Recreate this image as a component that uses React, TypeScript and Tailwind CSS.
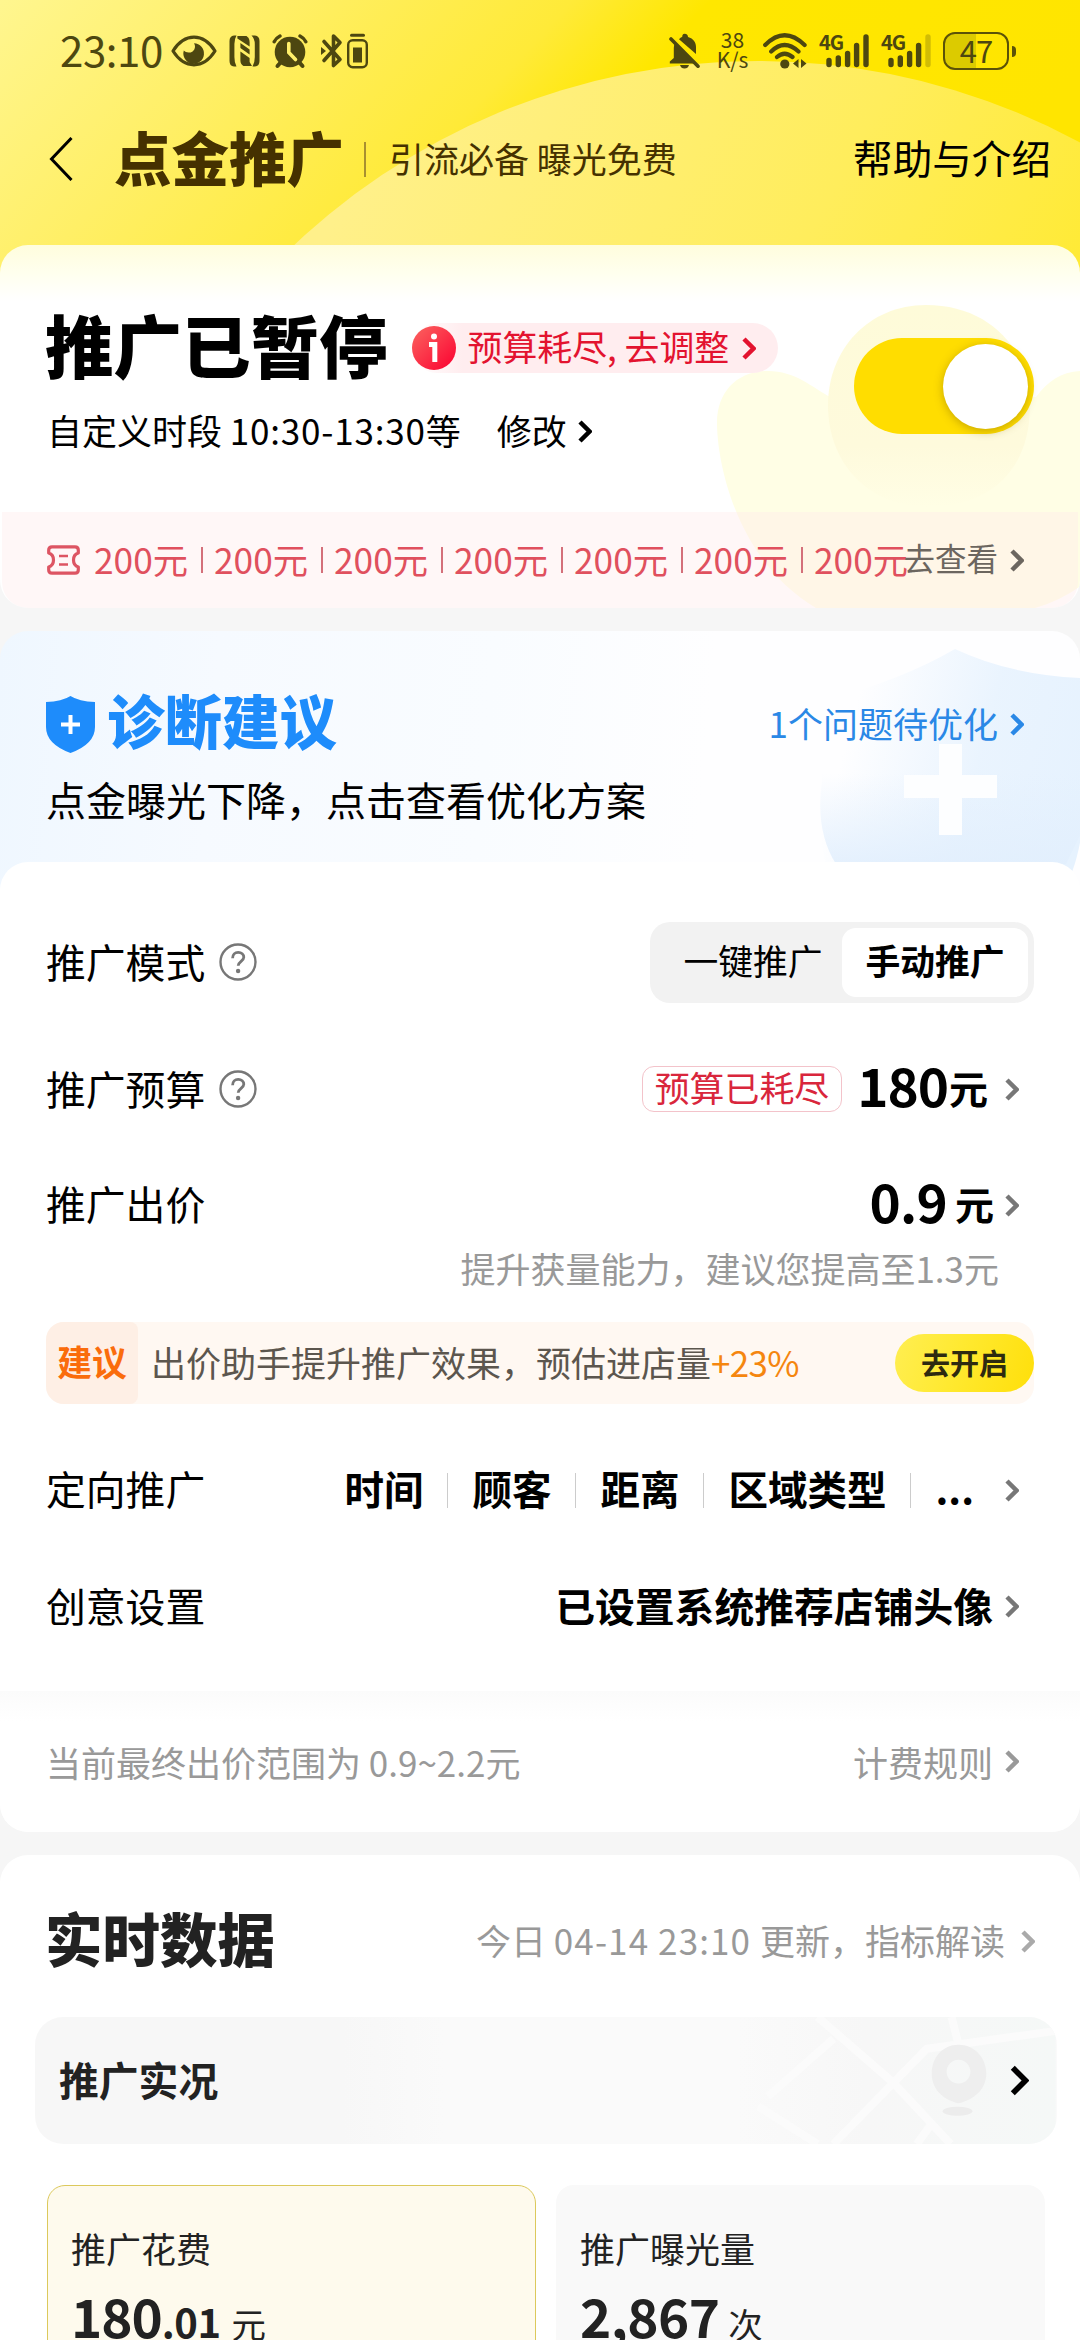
import { clsx } from "clsx";
import type { ReactNode } from "react";
import { twMerge } from "tailwind-merge";

type ChevronProps = {
  className?: string;
  strokeWidth?: number;
};

const Chevron = ({ className, strokeWidth = 4.5 }: ChevronProps) => (
  <svg
    viewBox="0 0 14 23"
    fill="none"
    stroke="currentColor"
    strokeWidth={strokeWidth}
    className={twMerge("h-[23px] w-[14px] shrink-0", className)}
  >
    <path d="M2 2 L11.5 11.5 L2 21" />
  </svg>
);

const HelpIcon = () => (
  <svg viewBox="0 0 38 38" fill="none" className="h-[38px] w-[38px] text-[#777]">
    <circle cx="19" cy="19" r="17.5" stroke="currentColor" strokeWidth="2.4" />
    <path
      d="M13.6 15.2 C13.6 11.6 15.9 9.4 19.2 9.4 C22.5 9.4 24.8 11.4 24.8 14.3 C24.8 18.2 19.2 18.6 19.2 22.8"
      stroke="currentColor"
      strokeWidth="2.8"
    />
    <circle cx="19.1" cy="28" r="2.2" fill="currentColor" />
  </svg>
);

const SignalIcon = ({ weak }: { weak?: boolean }) => (
  <div className="relative h-[36px] w-[50px]">
    <span className="absolute -top-px left-0 text-[20px] leading-none font-bold tracking-[-1px]">
      4G
    </span>
    <svg viewBox="0 0 50 36" className="h-full w-full" stroke="currentColor" strokeWidth="5.4" strokeLinecap="round">
      <path d="M10 27.5 V31.5 M19.3 25 V31.5 M28.6 20.5 V31.5 M37.6 12.5 V31.5" />
      <path d="M47 4 V31.5" opacity={weak ? 0.25 : 1} />
    </svg>
  </div>
);

const StatusBar = () => (
  <div className="flex h-[36px] items-center justify-between pr-[64px] pl-[60px] text-[#4d4710]">
    <div className="flex items-center">
      <span className="mb-1 w-[111px] text-[42px] leading-[36px] tracking-[-0.4px]">23:10</span>
      <svg viewBox="0 0 46 32" className="h-[32px] w-[46px]" fill="none">
        <path
          d="M2 16 C8 6.5 15 2.2 23 2.2 C31 2.2 38 6.5 44 16 C38 25.5 31 29.8 23 29.8 C15 29.8 8 25.5 2 16 Z"
          stroke="currentColor"
          strokeWidth="3.2"
          strokeLinejoin="round"
        />
        <path
          d="M23 8.2 A10.3 10.3 0 1 1 12.8 15.6 C14.6 17.6 18.6 18.4 21.6 16.4 C24.4 14.4 24.6 10.6 23 8.2 Z"
          fill="currentColor"
        />
      </svg>
      <svg viewBox="0 0 31 32" className="ml-[12px] h-[32px] w-[31px]" fill="currentColor">
        <path d="M7.5 0.5 H5 Q0.5 1 0.5 6 V26 Q0.5 31 5 31.5 H7.5 Q5.4 28 5.4 22 V9 Q5.4 4 7.5 0.5 Z" />
        <path d="M23.5 31.5 H26 Q30.5 31 30.5 26 V6 Q30.5 1 26 0.5 H22.5 Q25.8 4 25.8 9 V22 Q25.8 28 23.5 31.5 Z" />
        <path d="M8.4 1 H17.5 Q20.6 3 20.6 7 V11.6 L8.4 3.4 Z" />
        <path d="M11.4 8 L20.6 14.6 V19.6 L11.4 13 Z M11.4 16.5 L20.6 23 V27 L23 31 H14.5 Q11.4 29 11.4 25.5 Z" />
      </svg>
      <svg viewBox="0 0 36 36" className="ml-[12px] h-[36px] w-[36px]">
        <path d="M9 29 L5.5 33 M27 29 L30.5 33" stroke="currentColor" strokeWidth="4" strokeLinecap="round" />
        <path
          d="M2.2 8.8 Q4 5 8 3 M33.8 8.8 Q32 5 28 3"
          fill="none"
          stroke="currentColor"
          strokeWidth="3.4"
          strokeLinecap="round"
        />
        <circle cx="18" cy="19" r="15.3" fill="currentColor" />
        <path d="M16.8 10.5 V19.5 L23.5 26.5" fill="none" stroke="#fff06b" strokeWidth="3.6" strokeLinecap="round" />
      </svg>
      <svg viewBox="0 0 22 36" className="ml-[13px] h-[36px] w-[22px]" fill="none" stroke="currentColor">
        <path
          d="M3 8.5 L19 26.5 L12.5 32.5 V3 L19 9.5 L3 27.5"
          strokeWidth="3.6"
          strokeLinejoin="round"
          strokeLinecap="round"
        />
        <path d="M0 14 L5 18 L0 22 Z" fill="currentColor" stroke="none" />
      </svg>
      <svg viewBox="0 0 21 36" className="ml-[4px] h-[36px] w-[21px]" fill="none" stroke="currentColor">
        <path d="M4.5 2.3 H16.5" strokeWidth="3" strokeLinecap="round" />
        <rect x="1.2" y="7.2" width="18.6" height="27" rx="4.5" strokeWidth="2.4" />
        <rect x="6" y="14.5" width="9" height="15" fill="currentColor" stroke="none" />
      </svg>
    </div>
    <div className="flex items-center">
      <svg viewBox="0 0 31 36" className="h-[36px] w-[31px]" fill="currentColor">
        <path d="M15.5 0.8 C18 0.8 19 2.3 19 4 C24.5 5.5 27 9.5 27 14 V21 L10 6.2 C11 5 12 4.4 13.2 4 C13.2 2.2 13.8 0.8 15.5 0.8 Z" />
        <path d="M5.8 10 L26 30.5 H0.8 V28.5 L4.8 25 V15 Q4.8 12 5.8 10 Z" />
        <path d="M11 32 H20 Q19 35.5 15.5 35.5 Q12 35.5 11 32 Z" />
        <path d="M2 6 L29 33.2" stroke="currentColor" strokeWidth="3.6" strokeLinecap="round" />
      </svg>
      <div className="mb-1 ml-[16px] flex w-[33px] flex-col items-center text-[21px] leading-[20px]">
        <span>38</span>
        <span>K/s</span>
      </div>
      <svg viewBox="0 0 44 36" className="ml-[14px] h-[36px] w-[44px]" fill="none" stroke="currentColor">
        <path
          d="M2.2 12 Q21.5 -7.5 41.6 12 M8.2 18.5 Q21.5 5.5 35.5 18.5 M14 24 Q21.5 17.5 29.5 24"
          strokeWidth="4.2"
          strokeLinecap="round"
        />
        <circle cx="21.8" cy="31" r="4.6" fill="currentColor" stroke="none" />
        <path d="M35.5 26 V35 L30 30.5 Z M38 26 V35 L43.5 30.5 Z" fill="currentColor" stroke="none" />
      </svg>
      <div className="ml-[12px]">
        <SignalIcon />
      </div>
      <div className="ml-[12px]">
        <SignalIcon weak />
      </div>
      <div className="ml-[12px] flex h-[38px] w-[66px] items-center justify-center rounded-[12px] border-[2.5px] border-[#5b5208] bg-[linear-gradient(90deg,#dccb00_50%,transparent_50%)] text-[31px] leading-none tracking-[-1px]">
        <span className="mb-1">47</span>
      </div>
      <div className="ml-[3px] h-[11px] w-[4px] rounded-r-sm bg-[#5b5208]" />
    </div>
  </div>
);

const PageHeader = () => (
  <header className="relative h-[245px] shrink-0 pt-[33px]">
    <svg viewBox="0 0 1080 290" className="absolute inset-x-0 top-0 h-[290px] w-full">
      <defs>
        <linearGradient id="sky" x1="0" y1="0" x2="1" y2="0.25">
          <stop offset="0" stopColor="#fff68f" />
          <stop offset="0.25" stopColor="#ffef66" />
          <stop offset="0.5" stopColor="#ffea38" />
          <stop offset="0.62" stopColor="#ffe700" />
          <stop offset="1" stopColor="#ffe500" />
        </linearGradient>
        <linearGradient id="arc" x1="0.25" y1="0" x2="0.8" y2="0.3">
          <stop offset="0" stopColor="#fff08a" />
          <stop offset="0.5" stopColor="#ffed5c" />
          <stop offset="1" stopColor="#ffe81c" />
        </linearGradient>
      </defs>
      <rect width="1080" height="290" fill="url(#sky)" />
      <circle cx="758" cy="738" r="677" fill="url(#arc)" />
    </svg>
    <div className="relative">
      <StatusBar />
      <div className="mt-[60px] flex h-[60px] items-center pr-[29px] pl-[49px]">
        <svg viewBox="0 0 24 44" className="h-[44px] w-[24px]" fill="none" stroke="#000" strokeWidth="3">
          <path d="M22.5 1 L2.5 22 L22.5 43" />
        </svg>
        <h1 className="mb-[7px] ml-[41px] text-[57.5px] leading-[56px] font-black text-[#453100]">点金推广</h1>
        <div className="ml-[20px] h-[35px] w-[2px] bg-[#a89030]" />
        <p className="mb-1 ml-[23px] text-[35px] leading-none text-[#453100]">引流必备 曝光免费</p>
        <a className="mb-[5px] ml-auto text-[39.6px] leading-none">帮助与介绍</a>
      </div>
    </div>
  </header>
);

const vouchers = ["200元", "200元", "200元", "200元", "200元", "200元", "200元"];

const StatusCard = () => (
  <section className="relative h-[363px] shrink-0 overflow-hidden rounded-[28px] bg-[linear-gradient(180deg,#fffddd_0px,#ffffee_28px,#ffffff_56px)]">
    <svg viewBox="0 0 1080 363" className="absolute inset-0 h-full w-full">
      <defs>
        <linearGradient id="bud" x1="0" y1="0" x2="0" y2="1">
          <stop offset="0" stopColor="#fefbd9" />
          <stop offset="0.7" stopColor="#fefadc" />
          <stop offset="1" stopColor="#fffee5" />
        </linearGradient>
      </defs>
      <path
        d="M717 178 C717 146 738 126 768 126 C795 126 812 142 830 152 H1036 C1048 136 1062 126 1082 126 V340 Q1060 356 1035 363 H816 C735 315 717 215 717 178 Z"
        fill="#fffee5"
      />
      <path d="M828 160 C828 105 868 60 926 60 C990 60 1030 105 1030 160 C1030 230 985 262 928 262 C870 262 828 220 828 160 Z" fill="url(#bud)" />
    </svg>
    <div className="relative flex h-full flex-col">
      <div className="flex h-[267px] items-start justify-between pr-[46px] pl-[45px]">
        <div>
          <div className="mt-[68px] flex h-[70px] items-center">
            <h2 className="mb-2 text-[68.5px] leading-none font-black">推广已暂停</h2>
            <div className="ml-[24px] flex h-[50px] items-center rounded-full bg-[linear-gradient(90deg,#ffffff_0px,#ffedef_50px)] pr-[22px] text-[#e3132f]">
              <svg viewBox="0 0 44 44" className="h-[44px] w-[44px]">
                <defs>
                  <linearGradient id="alert" x1="0" y1="0" x2="1" y2="1">
                    <stop offset="0" stopColor="#fb6560" />
                    <stop offset="1" stopColor="#fb0030" />
                  </linearGradient>
                </defs>
                <circle cx="22" cy="22" r="22" fill="url(#alert)" />
                <circle cx="22" cy="10.5" r="3" fill="#fff" />
                <path d="M17 18.5 H22.8 V36" fill="none" stroke="#fff" strokeWidth="5" />
              </svg>
              <span className="mb-[3px] ml-[12px] text-[34.9px] leading-none">预算耗尽, 去调整</span>
              <Chevron className="ml-[13px]" />
            </div>
          </div>
          <div className="mt-[29px] flex h-[38px] items-center pl-[2px] text-[35px] leading-none">
            <span className="mb-1">
              自定义时段 <span className="tracking-[0.8px]">10:30-13:30</span>等
            </span>
            <span className="mb-1 ml-[36px]">修改</span>
            <Chevron className="ml-[11px]" />
          </div>
        </div>
        <div className="mt-[93px] flex h-[96px] w-[180px] items-center justify-end rounded-full bg-[#ffdd00] pr-[6px]">
          <div className="h-[85px] w-[85px] rounded-full bg-white shadow-[0_2px_10px_rgba(130,100,0,0.45)]" />
        </div>
      </div>
      <div className="mx-[2px] flex h-[96px] items-center rounded-b-[26px] bg-[#ffeaec]/40 pr-[54px] pl-[45px]">
        <svg viewBox="0 0 33 30" className="h-[30px] w-[33px] shrink-0" fill="none" stroke="#dd5563" strokeWidth="3.2">
          <path
            d="M5 1.8 H28 Q31.3 1.8 31.3 5 V8 Q26.5 9.5 26.5 15 Q26.5 20.5 31.3 22 V25 Q31.3 28.2 28 28.2 H5 Q1.7 28.2 1.7 25 V22 Q6.5 20.5 6.5 15 Q6.5 9.5 1.7 8 V5 Q1.7 1.8 5 1.8 Z"
            strokeLinejoin="round"
          />
          <path d="M12 11 H21 M12 19.5 H21" strokeWidth="2.6" />
        </svg>
        <div className="ml-[14px] flex min-w-0 flex-1">
          {vouchers.map((voucher, index) => (
            <div key={index} className="flex w-[120px] shrink-0 items-center">
              <span className="mb-[3px] w-[107px] text-[35.3px] leading-[52px] text-[#e0505e]">{voucher}</span>
              {index < vouchers.length - 1 && <div className="h-[26px] w-[2px] bg-[#d4707a]" />}
            </div>
          ))}
        </div>
        <div className="flex shrink-0 items-center text-[#6c665f]">
          <span className="mb-1 text-[31.5px] leading-none">去查看</span>
          <Chevron className="ml-[12px]" />
        </div>
      </div>
    </div>
  </section>
);

const DiagnosisCard = () => (
  <section className="relative mt-[23px] h-[261px] shrink-0 overflow-hidden rounded-t-[28px] bg-[linear-gradient(95deg,#eff7ff_0%,#f6faff_20%,#f9fcff_45%,#fefeff_65%)]">
    <svg viewBox="0 0 1080 261" className="absolute inset-0 h-full w-full">
      <defs>
        <linearGradient id="shieldBg" x1="0" y1="0.35" x2="1" y2="0.6">
          <stop offset="0.1" stopColor="#e6f2fe" stopOpacity="0" />
          <stop offset="0.6" stopColor="#e6f2fe" stopOpacity="0.85" />
          <stop offset="1" stopColor="#e6f2fe" />
        </linearGradient>
        <linearGradient id="shieldLow" x1="0" y1="0" x2="0" y2="1">
          <stop offset="0.2" stopColor="#e2effd" stopOpacity="0" />
          <stop offset="1" stopColor="#e2effd" stopOpacity="0.9" />
        </linearGradient>
      </defs>
      <path d="M822 70 Q900 50 955 18 Q1010 44 1082 47 V200 Q1076 240 1062 261 H836 Q815 220 822 150 Z" fill="url(#shieldBg)" />
      <path d="M822 120 V150 Q815 200 836 233 H1066 L1082 200 V120 Z" fill="url(#shieldLow)" />
      <path d="M939 113 H962 V144 H997 V167 H962 V204 H939 V167 H904 V144 H939 Z" fill="#fdfeff" />
    </svg>
    <div className="relative flex h-full flex-col pr-[56px] pl-[46px]">
      <div className="mt-[62px] flex h-[62px] items-center">
        <svg viewBox="0 0 49 57" className="h-[57px] w-[49px]">
          <path d="M24.5 0 Q33 5.5 49 6 V31 Q49 48 24.5 57 Q0 48 0 31 V6 Q16 5.5 24.5 0 Z" fill="#1e8cfb" />
          <path d="M24.5 19 V38 M15 28.5 H34" stroke="#fff" strokeWidth="4" />
        </svg>
        <h2 className="mb-2 ml-[12px] text-[57.5px] leading-none font-black text-[#1e8cfb]">诊断建议</h2>
        <div className="ml-auto flex items-center text-[#2a88e6]">
          <span className="mb-1 text-[35px] leading-none">1个问题待优化</span>
          <Chevron className="ml-[12px]" />
        </div>
      </div>
      <p className="mt-[24px] text-[40px] leading-none">点金曝光下降，点击查看优化方案</p>
    </div>
  </section>
);

type SettingRowProps = {
  label: string;
  help?: boolean;
  className?: string;
  children: ReactNode;
};

const SettingRow = ({ label, help, className, children }: SettingRowProps) => (
  <div className={twMerge("flex h-[82px] items-center justify-between pr-[61px] pl-[46px]", className)}>
    <div className="flex items-center gap-[14px]">
      <span className={clsx("text-[39.8px] leading-none", help ? "mb-[3px]" : "mb-1")}>{label}</span>
      {help && <HelpIcon />}
    </div>
    <div className="flex items-center">{children}</div>
  </div>
);

const targets = ["时间", "顾客", "距离", "区域类型"];

const SettingsPanel = () => (
  <section className="relative z-10 -mt-[30px] flex h-[970px] shrink-0 flex-col rounded-[28px] bg-white">
    <div className="pt-[59px]">
      <SettingRow label="推广模式" help className="pr-[46px]">
        <div className="flex h-[81px] w-[384px] items-center rounded-[20px] bg-[#f2f2f2] p-[6px] text-[34.8px] leading-none">
          <span className="mb-1 flex-1 pl-[8px] text-center">一键推广</span>
          <div className="flex h-full w-[186px] items-center justify-center rounded-[14px] bg-white font-bold">
            <span className="mb-1">手动推广</span>
          </div>
        </div>
      </SettingRow>
      <SettingRow label="推广预算" help className="mt-[45px]">
        <span className="flex h-[46px] items-center rounded-[12px] border border-[#f3c3ca] px-[12px] text-[#d9263c]">
          <span className="mb-[3px] text-[34.9px] leading-none">预算已耗尽</span>
        </span>
        <span className="mb-[9px] ml-[15px] text-[53px] leading-none font-bold tracking-[-1px]">180</span>
        <span className="mb-[3px] ml-px text-[39px] leading-none font-bold">元</span>
        <Chevron className="ml-[17px] text-[#777]" />
      </SettingRow>
      <SettingRow label="推广出价" className="mt-[34px]">
        <span className="mb-[9px] text-[53px] leading-none font-bold tracking-[-0.8px]">0.9</span>
        <span className="mb-[3px] ml-[8px] text-[39px] leading-none font-bold">元</span>
        <Chevron className="ml-[11px] text-[#777]" />
      </SettingRow>
      <p className="mt-[4px] pr-[81px] text-right text-[35px] leading-none text-[#999]">
        提升获量能力，建议您提高至1.3元
      </p>
      <div className="mx-[46px] mt-[37px] flex h-[82px] items-center rounded-[18px] bg-[#fff8f2]">
        <div className="flex h-full w-[92px] items-center justify-center rounded-l-[18px] rounded-r-[8px] bg-[#feefe5] font-bold text-[#fa6c0c]">
          <span className="mb-1 text-[34.8px] leading-none">建议</span>
        </div>
        <p className="mb-1 ml-[13px] text-[35px] leading-none text-[#5c564e]">
          出价助手提升推广效果，预估进店量<span className="tracking-[-0.7px] text-[#f5860f]">+23%</span>
        </p>
        <button className="ml-auto h-[58px] w-[139px] rounded-full bg-[linear-gradient(110deg,#ffee52,#ffe930_45%,#ffdf0a)] pb-[2px] text-[29px] leading-none font-bold text-[#2e2a10]">
          去开启
        </button>
      </div>
      <SettingRow label="定向推广" className="mt-[45px]">
        {targets.map((target) => (
          <div key={target} className="flex items-center">
            <span className="mb-1 text-[39.5px] leading-none font-bold">{target}</span>
            <div className="mx-[24px] h-[35px] w-px bg-[#ccc]" />
          </div>
        ))}
        <span className="mb-1 text-[39.5px] leading-none font-bold">...</span>
        <Chevron className="ml-[31px] text-[#777]" />
      </SettingRow>
      <SettingRow label="创意设置" className="mt-[35px]">
        <span className="mb-1 text-[39.8px] leading-none font-bold">已设置系统推荐店铺头像</span>
        <Chevron className="ml-[12px] text-[#777]" />
      </SettingRow>
    </div>
    <div className="mt-[43px] flex flex-1 items-center justify-between rounded-b-[28px] bg-[linear-gradient(180deg,#fbfbfb,#ffffff_30px)] pr-[61px] pl-[46px] text-[35px] leading-none text-[#999]">
      <span>当前最终出价范围为 0.9~2.2元</span>
      <a className="flex items-center">
        计费规则
        <Chevron className="ml-[12px]" />
      </a>
    </div>
  </section>
);

const LiveMap = () => (
  <svg viewBox="0 0 320 128" className="absolute inset-y-0 right-0 h-full w-[320px]" fill="none">
    <defs>
      <linearGradient id="mapFade" x1="0" y1="0" x2="1" y2="0">
        <stop offset="0" stopColor="#f7f7f7" stopOpacity="0" />
        <stop offset="0.4" stopColor="#f7f7f7" />
        <stop offset="1" stopColor="#f5f8f7" />
      </linearGradient>
    </defs>
    <rect width="320" height="128" fill="url(#mapFade)" />
    <path
      d="M80 0 L156 66 L214 128 M96 128 L190 32 L320 14 M215 0 L222 28 M30 80 L96 22 M20 90 L80 128 M180 128 L196 106"
      stroke="#fbfbfb"
      strokeWidth="8"
    />
    <path
      d="M222 28 C238 28 250 41 250 57 C250 74 236 84 222 87 C208 84 195 74 195 57 C195 41 206 28 222 28 Z M222 43 C215 43 210 49 210 55 C210 62 215 67 222 67 C229 67 234 62 234 55 C234 49 229 43 222 43 Z"
      fill="#eeeeee"
      fillRule="evenodd"
    />
    <ellipse cx="221" cy="95" rx="15" ry="4.5" fill="#ececec" />
  </svg>
);

const RealtimeCard = () => (
  <section className="mt-[23px] h-[485px] shrink-0 rounded-t-[28px] bg-white pt-[56px]">
    <div className="flex h-[60px] items-center justify-between pr-[45px] pl-[45px]">
      <h2 className="mb-[7px] text-[57.5px] leading-none font-black text-[#222]">实时数据</h2>
      <a className="flex items-center text-[35px] leading-none text-[#999]">
        <span className="mb-1">
          今日 <span className="tracking-[1.1px]">04-14 23:10 </span>更新，指标解读
        </span>
        <Chevron className="ml-[16px] text-[#aaa]" />
      </a>
    </div>
    <div className="relative mt-[46px] mr-[23px] ml-[35px] flex h-[127px] items-center justify-between overflow-hidden rounded-[28px] bg-[linear-gradient(90deg,#f7f7f7_30%,#fafafa_40%)] pr-[28px] pl-[24px]">
      <LiveMap />
      <span className="relative mb-1 text-[39.8px] leading-none font-bold text-[#222]">推广实况</span>
      <Chevron className="relative h-[31px] w-[19px]" strokeWidth={4.2} />
    </div>
    <div className="mt-[41px] flex gap-[20px] pl-[47px] text-[#222]">
      <div className="h-[200px] w-[489px] rounded-[18px] border border-[#dcc95c] bg-[#fefaed] px-[23px] pt-[44px]">
        <p className="text-[35px] leading-none">推广花费</p>
        <p className="mt-[24px] flex items-baseline leading-none">
          <span className="text-[53px] leading-none font-bold tracking-[-1px]">180</span>
          <span className="text-[40px] leading-none font-bold tracking-[-0.5px]">.01</span>
          <span className="ml-[11px] text-[34.5px] leading-none">元</span>
        </p>
      </div>
      <div className="h-[200px] w-[489px] rounded-[18px] bg-[#f9f9f9] px-[24px] pt-[45px]">
        <p className="text-[35px] leading-none">推广曝光量</p>
        <p className="mt-[24px] flex items-baseline leading-none">
          <span className="text-[53px] leading-none font-bold tracking-[-0.6px]">2,867</span>
          <span className="ml-[9px] text-[34.5px] leading-none">次</span>
        </p>
      </div>
    </div>
  </section>
);

export default function App() {
  return (
    <main className="flex h-[2340px] w-[1080px] flex-col overflow-hidden bg-[#f6f6f6] font-['Noto_Sans_CJK_SC',sans-serif] whitespace-nowrap text-black">
      <PageHeader />
      <StatusCard />
      <DiagnosisCard />
      <SettingsPanel />
      <RealtimeCard />
    </main>
  );
}
